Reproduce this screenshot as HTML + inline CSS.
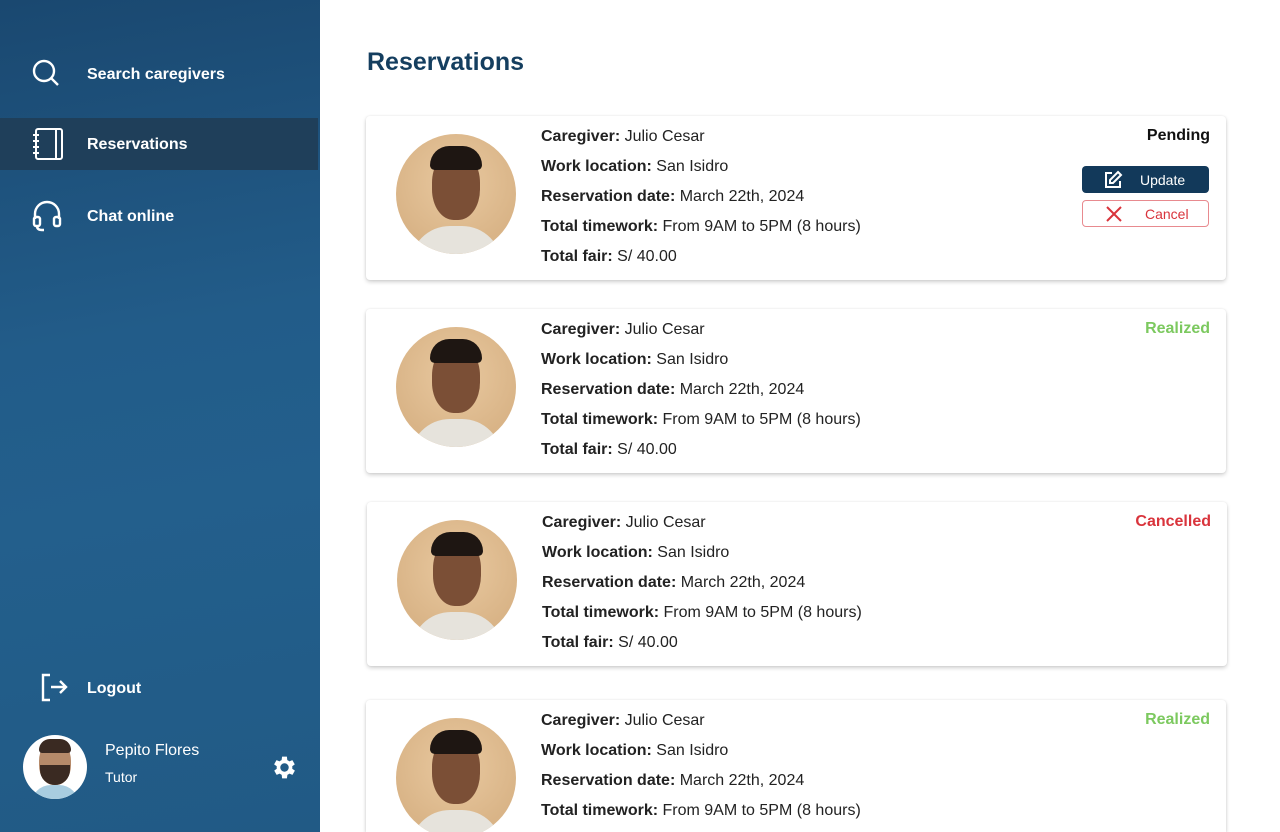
<!DOCTYPE html>
<html style="width:1280px;height:832px;overflow:hidden"><head><meta charset="utf-8"><style>
*{margin:0;padding:0;box-sizing:border-box}
body{width:1280px;height:832px;overflow:hidden;font-family:"Liberation Sans",sans-serif;background:#fff;position:relative}
.side{position:absolute;left:0;top:0;width:320px;height:832px;background:linear-gradient(170deg,#1a4870 0%,#225c89 40%,#235f8c 60%,#215a85 100%)}
.nav{position:absolute;left:0;width:318px;height:52px;color:#fff;font-weight:bold;font-size:16px;display:flex;align-items:center}
.nav svg{position:absolute;left:30px}
.nav span{position:absolute;left:87px;top:18px}
.main h1{position:absolute;left:367px;top:48px;font-size:25px;color:#143e5f;font-weight:bold}
.card{position:absolute;left:366px;width:860px;height:164px;background:#fff;border-radius:4px;box-shadow:0 2px 4px rgba(0,0,0,.18),0 0 2px rgba(0,0,0,.08);overflow:hidden}
.av{position:absolute;left:30px;top:18px;width:120px;height:120px;border-radius:50%;background:radial-gradient(circle at 50% 40%,#e9c9a0,#d9b487 70%);overflow:hidden}
.info{position:absolute;left:175px;top:6px;font-size:16px;color:#222;line-height:30px}
.st{position:absolute;right:16px;top:9px;line-height:22px;font-size:16px;font-weight:bold}
.btn{position:absolute;right:17px;width:127px;height:27px;border-radius:4px;font-size:14px;display:flex;align-items:center}
</style></head><body>
<div class="side">
 <div class="nav" style="top:48px"><svg width="32" height="32" viewBox="0 0 32 32" fill="none" stroke="#fff" stroke-width="2.4"><circle cx="14" cy="13" r="10"/><line x1="21" y1="20" x2="28" y2="27"/></svg><span>Search caregivers</span></div>
 <div class="nav" style="top:118px;background:#1f3f5a"><svg width="34" height="34" viewBox="0 0 34 34" fill="none" stroke="#fff" stroke-width="2"><rect x="6" y="2" width="26" height="30" rx="2"/><line x1="26" y1="2" x2="26" y2="32"/><path d="M3 8h6M3 14h6M3 20h6M3 26h6"/></svg><span>Reservations</span></div>
 <div class="nav" style="top:190px"><svg width="34" height="34" viewBox="0 0 34 34" fill="none" stroke="#fff" stroke-width="2.4"><path d="M5 20v-5a12 12 0 0 1 24 0v5"/><rect x="4" y="18" width="6" height="9" rx="2"/><rect x="24" y="18" width="6" height="9" rx="2"/><path d="M7 27q0 4 5 4h2"/></svg><span>Chat online</span></div>
 <div class="nav" style="top:662px"><svg width="40" height="30" viewBox="0 0 40 30" fill="none" stroke="#fff" stroke-width="2.4" style="left:40px"><path d="M10 2H3v25h7"/><path d="M11 14h14M20 8l6 6-6 6"/></svg><span>Logout</span></div>
 <div style="position:absolute;left:23px;top:735px;width:64px;height:64px;border-radius:50%;background:#fff;overflow:hidden"><div style="position:absolute;left:16px;top:6px;width:32px;height:44px;border-radius:45%;background:#b58a6a"></div><div style="position:absolute;left:16px;top:4px;width:32px;height:14px;border-radius:14px 14px 4px 4px;background:#3a2a22"></div><div style="position:absolute;left:17px;top:30px;width:30px;height:20px;border-radius:0 0 15px 15px;background:#3a2a22"></div><div style="position:absolute;left:8px;top:50px;width:48px;height:20px;border-radius:20px 20px 0 0;background:#a9cde0"></div></div>
 <div style="position:absolute;left:105px;top:742px;color:#fff;font-size:16px">Pepito Flores</div>
 <div style="position:absolute;left:105px;top:769px;color:#fff;font-size:14px">Tutor</div>
 <svg style="position:absolute;left:270px;top:753px" width="29" height="29" viewBox="0 0 24 24"><path fill="#fff" d="M19.4 13a7.5 7.5 0 0 0 0-2l2.1-1.6-2-3.5-2.5 1a7 7 0 0 0-1.7-1L15 3h-4l-.4 2.9a7 7 0 0 0-1.7 1l-2.5-1-2 3.5L6.6 11a7.5 7.5 0 0 0 0 2l-2.1 1.6 2 3.5 2.5-1a7 7 0 0 0 1.7 1L11 21h4l.4-2.9a7 7 0 0 0 1.7-1l2.5 1 2-3.5zM13 15.5a3.5 3.5 0 1 1 0-7 3.5 3.5 0 0 1 0 7z" transform="translate(-1 0)"/></svg>
</div>
<div class="main">
<h1>Reservations</h1>
<div class="card" style="top:116px">
 <div class="av"><div style="position:absolute;left:36px;top:18px;width:48px;height:68px;border-radius:45%;background:#7b4f36"></div><div style="position:absolute;left:34px;top:12px;width:52px;height:24px;border-radius:24px 24px 6px 6px;background:#1e1612"></div><div style="position:absolute;left:14px;top:92px;width:92px;height:40px;border-radius:40px 40px 0 0;background:#e6e3dc"></div></div>
 <div class="info"><b>Caregiver:</b> Julio Cesar<br><b>Work location:</b> San Isidro<br><b>Reservation date:</b> March 22th, 2024<br><b>Total timework:</b> From 9AM to 5PM (8 hours)<br><b>Total fair:</b> S/ 40.00</div>
 <div class="st" style="color:#111">Pending</div>
 <div class="btn" style="top:50px;background:#12395a;color:#fff"><svg style="position:absolute;left:21px" width="20" height="20" viewBox="0 0 20 20" fill="none" stroke="#fff" stroke-width="2"><path d="M9 3H3v14h14v-6"/><path d="M15 2l3 3-8 8H7v-3z"/></svg><span style="position:absolute;left:58px">Update</span></div>
 <div class="btn" style="top:84px;border:1px solid #e88a8f;color:#d9343c"><svg style="position:absolute;left:22px" width="18" height="18" viewBox="0 0 18 18" stroke="#d9343c" stroke-width="2"><path d="M2 2l14 14M16 2L2 16"/></svg><span style="position:absolute;left:62px">Cancel</span></div>
</div>
<div class="card" style="top:309px">
 <div class="av"><div style="position:absolute;left:36px;top:18px;width:48px;height:68px;border-radius:45%;background:#7b4f36"></div><div style="position:absolute;left:34px;top:12px;width:52px;height:24px;border-radius:24px 24px 6px 6px;background:#1e1612"></div><div style="position:absolute;left:14px;top:92px;width:92px;height:40px;border-radius:40px 40px 0 0;background:#e6e3dc"></div></div>
 <div class="info"><b>Caregiver:</b> Julio Cesar<br><b>Work location:</b> San Isidro<br><b>Reservation date:</b> March 22th, 2024<br><b>Total timework:</b> From 9AM to 5PM (8 hours)<br><b>Total fair:</b> S/ 40.00</div>
 <div class="st" style="color:#7cc95f">Realized</div>
</div>
<div class="card" style="top:502px;left:367px">
 <div class="av"><div style="position:absolute;left:36px;top:18px;width:48px;height:68px;border-radius:45%;background:#7b4f36"></div><div style="position:absolute;left:34px;top:12px;width:52px;height:24px;border-radius:24px 24px 6px 6px;background:#1e1612"></div><div style="position:absolute;left:14px;top:92px;width:92px;height:40px;border-radius:40px 40px 0 0;background:#e6e3dc"></div></div>
 <div class="info"><b>Caregiver:</b> Julio Cesar<br><b>Work location:</b> San Isidro<br><b>Reservation date:</b> March 22th, 2024<br><b>Total timework:</b> From 9AM to 5PM (8 hours)<br><b>Total fair:</b> S/ 40.00</div>
 <div class="st" style="color:#d9343c">Cancelled</div>
</div>
<div class="card" style="top:700px;height:132px;border-radius:4px 4px 0 0">
 <div class="av"><div style="position:absolute;left:36px;top:18px;width:48px;height:68px;border-radius:45%;background:#7b4f36"></div><div style="position:absolute;left:34px;top:12px;width:52px;height:24px;border-radius:24px 24px 6px 6px;background:#1e1612"></div><div style="position:absolute;left:14px;top:92px;width:92px;height:40px;border-radius:40px 40px 0 0;background:#e6e3dc"></div></div>
 <div class="info"><b>Caregiver:</b> Julio Cesar<br><b>Work location:</b> San Isidro<br><b>Reservation date:</b> March 22th, 2024<br><b>Total timework:</b> From 9AM to 5PM (8 hours)</div>
 <div class="st" style="color:#7cc95f">Realized</div>
</div>
</div>
</body></html>
